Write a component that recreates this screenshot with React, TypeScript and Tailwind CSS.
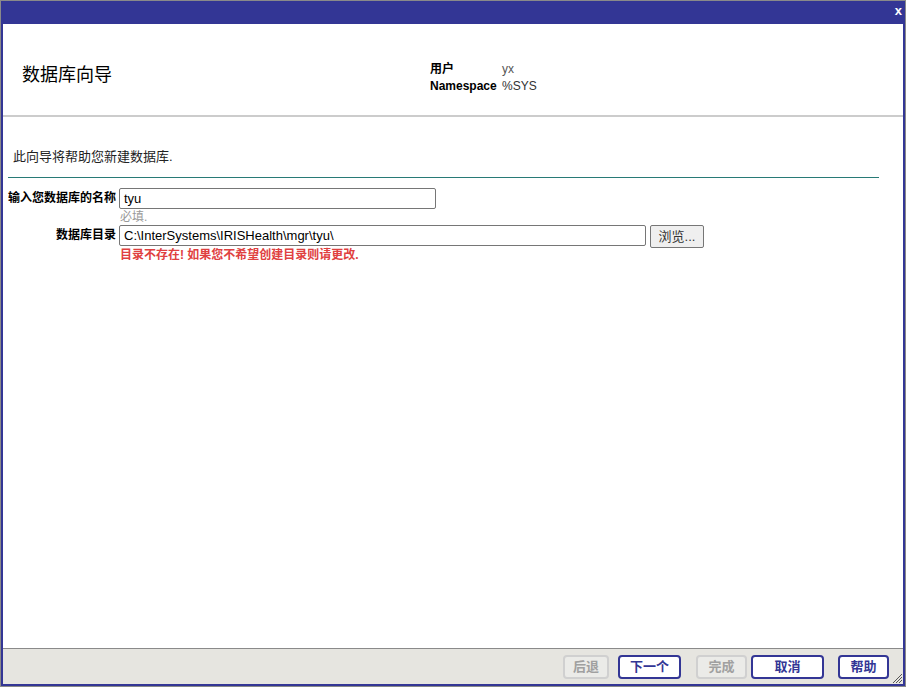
import * as React from 'react'

const font = { fontFamily: '"Liberation Sans", "Noto Sans CJK SC", sans-serif' }

function FooterButton(props: { label: string; width: string; disabled?: boolean; className?: string }) {
  const { label, width, disabled, className } = props
  return (
    <button
      className={`${width} ${className ?? ''} h-[24px] rounded-[4px] border-2 text-[13px] font-bold leading-none ${
        disabled ? 'border-[#d0d0d0] text-[#a0a0a0] bg-[#ebebe8]' : 'border-[#333695] text-[#333695] bg-white'
      }`}
    >
      {label}
    </button>
  )
}

export default function App() {
  return (
    <div className="w-[906px] h-[687px] border border-[#8a8a8a] bg-[#333695] flex flex-col" style={font}>
      {/* title bar */}
      <div className="h-[23px] flex-none flex items-start justify-end pr-[3px]">
        <span className="text-white font-bold text-[13px] leading-none mt-[3px]">x</span>
      </div>

      <div className="flex-1 mx-[2px] mb-[2px] bg-white flex flex-col">
        {/* header */}
        <div className="h-[93px] flex-none flex items-start border-b-2 border-[#cccccc]">
          <div className="w-[427px] pl-[19px] pt-[39px] text-[18px] leading-[24px] text-black">数据库向导</div>
          <div className="pt-[37px] text-[12px] leading-[17px]">
            <div className="flex">
              <span className="w-[72px] font-bold text-black">用户</span>
              <span className="text-[#555]">yx</span>
            </div>
            <div className="flex">
              <span className="w-[72px] font-bold text-black">Namespace</span>
              <span className="text-[#333]">%SYS</span>
            </div>
          </div>
        </div>

        {/* body */}
        <div className="flex-1 pl-[5px] pr-[24px]">
          <div className="pt-[32px] pl-[5px] text-[13px] text-[#222] leading-[16px]">此向导将帮助您新建数据库.</div>
          <div className="mt-[12px] border-b border-[#287a76]" />

          <div className="mt-[10px] grid grid-cols-[108px_1fr] gap-x-[3px] text-[12px]">
            <div className="text-right font-bold text-black leading-[21px]">输入您数据库的名称</div>
            <div>
              <div className="w-[317px] h-[21px] border border-[#767676] rounded-[2px] px-[4px] text-[13px] leading-[19px] text-black">
                tyu
              </div>
              <div className="text-[#999] leading-[16px] pl-[1px]">必填.</div>
            </div>

            <div className="text-right font-bold text-black leading-[21px]">数据库目录</div>
            <div>
              <div className="flex items-start gap-[4px]">
                <div className="w-[527px] h-[21px] border border-[#767676] rounded-[2px] px-[4px] text-[13px] leading-[19px] text-black">
                  C:\InterSystems\IRISHealth\mgr\tyu\
                </div>
                <button className="w-[54px] h-[23px] border border-[#767676] rounded-[2px] bg-[#efefef] text-[13px] text-[#333] leading-none">
                  浏览...
                </button>
              </div>
              <div className="text-[#e04040] font-bold leading-[14px] pl-[1px]">目录不存在! 如果您不希望创建目录则请更改.</div>
            </div>
          </div>
        </div>

        {/* footer */}
        <div className="h-[36px] flex-none border-t border-[#8a8a8a] bg-[#e6e5e0] flex items-center justify-end pr-[14px] relative">
          <FooterButton label="后退" width="w-[46px]" disabled />
          <FooterButton label="下一个" width="w-[63px]" className="ml-[9px]" />
          <FooterButton label="完成" width="w-[51px]" disabled className="ml-[15px]" />
          <FooterButton label="取消" width="w-[73px]" className="ml-[4px]" />
          <FooterButton label="帮助" width="w-[51px]" className="ml-[14px]" />
          <svg className="absolute right-0 bottom-0" width="12" height="12" viewBox="0 0 12 12">
            <path d="M11 2 L2 11 M11 5 L5 11 M11 8 L8 11" stroke="#555" strokeWidth="1" />
          </svg>
        </div>
      </div>
    </div>
  )
}
